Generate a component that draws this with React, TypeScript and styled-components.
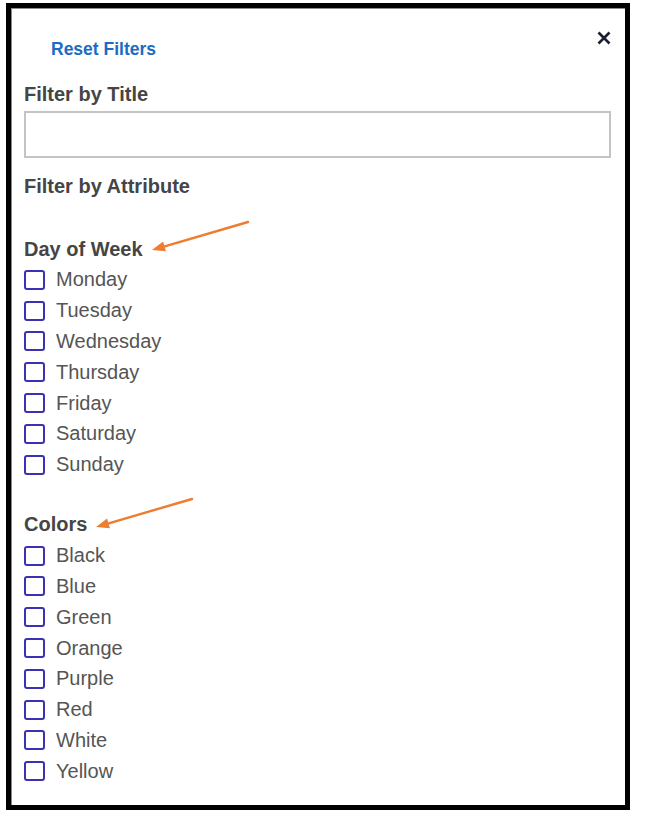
import React from "react";
import styled, { createGlobalStyle } from "styled-components";

const GlobalStyle = createGlobalStyle`
  body {
    margin: 0;
    background: #ffffff;
    font-family: "Liberation Sans", Arial, sans-serif;
  }
`;

type Group = {
  title: string;
  options: string[];
  arrowTop: number;
};

// attribute groups shown under "Filter by Attribute"
const groups: Group[] = [
  {
    title: "Day of Week",
    options: ["Monday", "Tuesday", "Wednesday", "Thursday", "Friday", "Saturday", "Sunday"],
    arrowTop: -19,
  },
  {
    title: "Colors",
    options: ["Black", "Blue", "Green", "Orange", "Purple", "Red", "White", "Yellow"],
    arrowTop: -17,
  },
];

const Callout: React.FC<{ top: number }> = ({ top }) => (
  <CalloutSvg viewBox="0 0 100 34" width={100} height={34} style={{ top }}>
    <line x1="97" y1="3" x2="12" y2="27.8" stroke="#ed7d31" strokeWidth="2.4" strokeLinecap="round" />
    <polygon points="1,31 14.9,32.2 12.1,22.6" fill="#ed7d31" />
  </CalloutSvg>
);

const App: React.FC = () => {
  return (
    <>
      <GlobalStyle />
      <Panel>
        <Header>
          <ResetLink type="button">Reset Filters</ResetLink>
          <CloseButton type="button" aria-label="Close">
            <svg width="14" height="14" viewBox="0 0 14 14">
              <path d="M1.5 1.5 L12.5 12.5 M12.5 1.5 L1.5 12.5" stroke="#1b2030" strokeWidth="2.6" />
            </svg>
          </CloseButton>
        </Header>

        <Heading>Filter by Title</Heading>
        <TitleInput type="text" />

        <AttributeHeading>Filter by Attribute</AttributeHeading>

        {groups.map((group) => (
          <GroupBox key={group.title}>
            <GroupTitle>
              <TitleText>
                {group.title}
                <Callout top={group.arrowTop} />
              </TitleText>
            </GroupTitle>
            {group.options.map((option) => (
              <OptionRow key={option}>
                <CheckBox type="checkbox" />
                {option}
              </OptionRow>
            ))}
          </GroupBox>
        ))}
      </Panel>
    </>
  );
};

export default App;

const Panel = styled.div`
  position: relative;
  box-sizing: border-box;
  width: 624px;
  height: 807px;
  margin: 3px 0 0 6px;
  padding: 0 14px 0 13px;
  border: 5px solid #000000;
  box-shadow: inset 1px 1px 0 #8a8a8a;
  background: #ffffff;
`;

const Header = styled.div`
  display: flex;
  justify-content: space-between;
  align-items: flex-start;
  padding-top: 23px;
`;

const ResetLink = styled.button`
  margin: 8px 0 0 27px;
  padding: 0;
  border: none;
  background: none;
  font-family: "Liberation Sans", Arial, sans-serif;
  font-size: 17.5px;
  font-weight: 700;
  line-height: 20px;
  color: #1a6cc4;
  cursor: pointer;
`;

const CloseButton = styled.button`
  display: flex;
  width: 14px;
  height: 14px;
  margin: 0;
  padding: 0;
  border: none;
  background: none;
  cursor: pointer;
`;

const Heading = styled.div`
  margin-top: 24px;
  font-size: 20px;
  font-weight: 700;
  line-height: 23px;
  color: #454545;
`;

const TitleInput = styled.input`
  display: block;
  box-sizing: border-box;
  width: 100%;
  height: 47px;
  margin-top: 5px;
  border: 2px solid #c4c4c4;
  border-radius: 0;
  outline: none;
  background: #ffffff;
`;

const AttributeHeading = styled(Heading)`
  margin-top: 17px;
  padding-bottom: 6.3px;
`;

const GroupBox = styled.div`
  margin-top: 29.4px;
`;

const GroupTitle = styled.div`
  height: 30.8px;
  font-size: 20px;
  font-weight: 700;
  line-height: 30.8px;
  color: #454545;
`;

const TitleText = styled.span`
  position: relative;
`;

const CalloutSvg = styled.svg`
  position: absolute;
  left: calc(100% + 8px);
  pointer-events: none;
`;

const OptionRow = styled.label`
  display: flex;
  align-items: center;
  height: 30.8px;
  font-size: 20px;
  line-height: 30.8px;
  color: #555555;
`;

const CheckBox = styled.input`
  appearance: none;
  box-sizing: border-box;
  width: 21px;
  height: 20px;
  margin: 0 11px 0 0;
  border: 2px solid #3b31b4;
  border-radius: 3px;
  background: #ffffff;
`;
